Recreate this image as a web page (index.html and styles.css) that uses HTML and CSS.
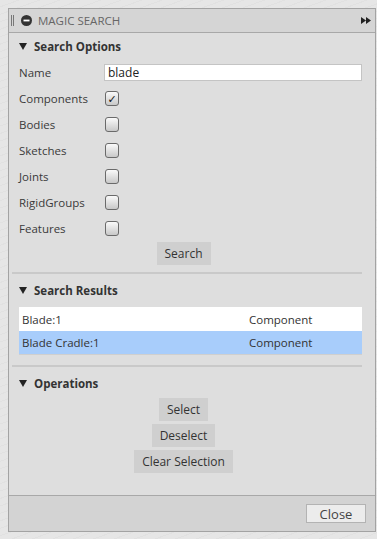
FILE: index.html
```html
<!DOCTYPE html>
<html lang="en">
<head>
    <meta charset="UTF-8">
    <title>Magic Search</title>
    <link rel="stylesheet" href="styles.css">
</head>
<body>
    <div class="panel">
        <div class="titlebar">
            <span class="grip"></span>
            <svg class="title-icon" width="11" height="11" viewBox="0 0 11 11"><circle cx="5.5" cy="5.5" r="5.5" fill="#333"/><rect x="2.5" y="4.6" width="6" height="1.8" fill="#fff"/></svg>
            <span class="title">MAGIC SEARCH</span>
            <svg class="expand" width="10" height="7" viewBox="0 0 10 7"><path d="M0 0 L5 3.5 L0 7 Z M5 0 L10 3.5 L5 7 Z" fill="#222"/></svg>
        </div>

        <div class="content">
            <div class="section-head first-head"><span class="tri"></span>Search Options</div>

            <div class="row name-row">
                <span class="label">Name</span>
                <input type="text" class="name-input" value="blade">
            </div>
            <div class="row"><span class="label">Components</span><span class="check checked">&#10003;</span></div>
            <div class="row"><span class="label">Bodies</span><span class="check"></span></div>
            <div class="row"><span class="label">Sketches</span><span class="check"></span></div>
            <div class="row"><span class="label">Joints</span><span class="check"></span></div>
            <div class="row"><span class="label">RigidGroups</span><span class="check"></span></div>
            <div class="row"><span class="label">Features</span><span class="check"></span></div>

            <div class="btn-col search-btns">
                <button class="btn">Search</button>
            </div>

            <div class="separator"></div>

            <div class="section-head results-head"><span class="tri"></span>Search Results</div>

            <div class="results">
                <div class="result"><span class="r-name">Blade:1</span><span class="r-type">Component</span></div>
                <div class="result selected"><span class="r-name">Blade Cradle:1</span><span class="r-type">Component</span></div>
            </div>

            <div class="separator sep-2"></div>

            <div class="section-head ops-head"><span class="tri"></span>Operations</div>

            <div class="btn-col">
                <button class="btn">Select</button>
                <button class="btn">Deselect</button>
                <button class="btn">Clear Selection</button>
            </div>
        </div>

        <div class="footer">
            <button class="close-btn">Close</button>
        </div>
    </div>
</body>
</html>
```

FILE: styles.css
```css
body {
    margin: 0;
    background-color: #e6e6e6;
    background-image: repeating-linear-gradient(160deg, transparent 0, transparent 6px, rgba(0,0,0,0.025) 6px, rgba(0,0,0,0.025) 7px);
    font-family: "Open Sans", "DejaVu Sans", sans-serif;
    font-size: 11.5px;
    color: #333;
    height: 539px;
    overflow: hidden;
}

.panel {
    margin: 8px 0 0 8px;
    width: 366px;
    height: 522px;
    border: 1px solid #a3a3a3;
    background-color: #dedede;
    display: flex;
    flex-direction: column;
}

.titlebar {
    height: 23px;
    background-color: #d5d5d5;
    border-bottom: 1px solid #a8a8a8;
    display: flex;
    align-items: center;
    padding: 0 3px 0 2px;
}

.grip {
    width: 1px;
    height: 11px;
    border-left: 1px solid #777;
    border-right: 1px solid #777;
    margin-right: 7px;
}

.title-icon {
    margin-right: 6px;
}

.title {
    color: #666;
    font-size: 11.5px;
    flex: 1;
}

.expand {
    margin-right: 1px;
}

.content {
    flex: 1;
    padding: 0 13px 0 1px;
}

.section-head {
    height: 27px;
    display: flex;
    align-items: center;
    padding-left: 9px;
    font-weight: bold;
    font-size: 11.5px;
    color: #333;
}

.first-head {
    margin-top: 0;
}

.results-head {
    margin-top: 3px;
}

.tri {
    width: 0;
    height: 0;
    border-left: 4px solid transparent;
    border-right: 4px solid transparent;
    border-top: 7px solid #222;
    margin-right: 7px;
}

.row {
    height: 26px;
    display: flex;
    align-items: center;
    padding-left: 9px;
}

.name-row {
    height: 24px;
    margin-bottom: 1px;
}

.label {
    width: 86px;
    color: #3a3a3a;
}

.name-input {
    flex: 1;
    height: 17px;
    box-sizing: border-box;
    border: 1px solid #c4c4c4;
    background: #fff;
    font-family: inherit;
    font-size: 12px;
    color: #222;
    padding: 0 3px;
    margin: 0 0 0 -1px;
    outline: none;
}

.check {
    width: 12px;
    height: 13px;
    border: 1px solid #6a6a6a;
    border-radius: 3px;
    background: linear-gradient(#fafafa, #c8c8c8);
    font-size: 11px;
    line-height: 13px;
    text-align: center;
    color: #111;
    margin-top: 1px;
}

.btn-col {
    display: flex;
    flex-direction: column;
    align-items: center;
    gap: 3px;
    padding-right: 5px;
}

.search-btns {
    padding-top: 1px;
}

.btn {
    font-family: inherit;
    font-size: 12px;
    color: #333;
    background-color: #cfcfcf;
    border: none;
    height: 23px;
    padding: 0 8px;
    margin: 0;
}

.separator {
    height: 2px;
    background-color: #c9c9c9;
    margin: 7px 0 0 2px;
}

.results {
    margin: 3px 0 0 9px;
    border-bottom: 1px solid #cfcfcf;
}

.result {
    height: 24px;
    display: flex;
    align-items: center;
    background-color: #fff;
    padding-left: 3px;
}

.result.selected {
    background-color: #a8cdfb;
    height: 23px;
}

.r-name {
    width: 227px;
}

.sep-2 {
    margin-top: 10px;
}

.ops-head {
    margin-top: 1px;
    height: 30px;
}

.footer {
    height: 36px;
    border-top: 1px solid #a8a8a8;
    background-color: #d3d3d3;
    display: flex;
    justify-content: flex-end;
    align-items: flex-start;
    padding: 8px 9px 0 0;
    box-sizing: border-box;
}

.close-btn {
    font-family: inherit;
    font-size: 13px;
    color: #444;
    width: 60px;
    height: 19px;
    background-color: #ececec;
    border: 1px solid #b3b3b3;
    padding: 0;
    margin: 0;
    line-height: 16px;
}
```
